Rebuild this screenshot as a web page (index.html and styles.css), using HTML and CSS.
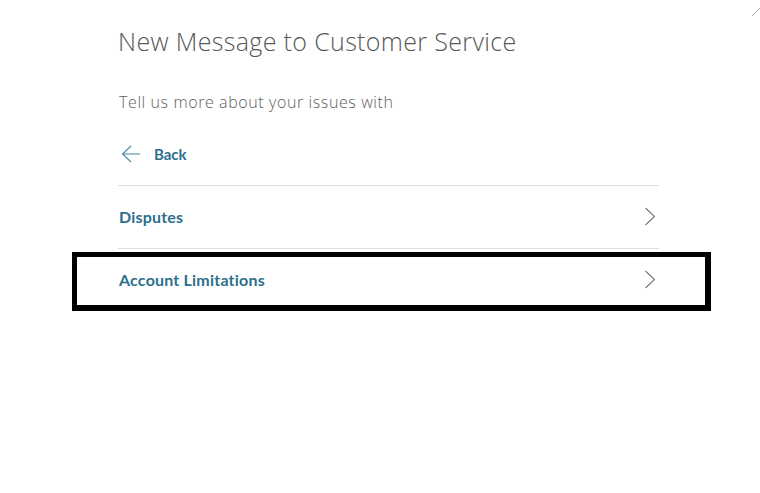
FILE: index.html
```html
<!DOCTYPE html>
<html>
<head>
<meta charset="utf-8">
<link rel="stylesheet" href="styles.css">
</head>
<body>
<div class="page">
  <h1 class="title">New Message to Customer Service</h1>
  <p class="subtitle">Tell us more about your issues with</p>
  <a class="back" href="#">
    <svg class="back-icon" width="20" height="18" viewBox="0 0 20 18"><path d="M10 1 L1.5 9 L10 17 M1.5 9 H19" fill="none" stroke="#4d86a3" stroke-width="1.1"/></svg>
    <span>Back</span>
  </a>
  <ul class="list">
    <li class="row"><span class="row-label">Disputes</span>
      <svg class="chev" width="12" height="19" viewBox="0 0 12 19"><path d="M1.5 1 L10.5 9.5 L1.5 18" fill="none" stroke="#777" stroke-width="1.1"/></svg></li>
    <li class="row"><span class="row-label">Account Limitations</span>
      <svg class="chev" width="12" height="19" viewBox="0 0 12 19"><path d="M1.5 1 L10.5 9.5 L1.5 18" fill="none" stroke="#777" stroke-width="1.1"/></svg></li>
  </ul>
</div>
<div class="highlight"></div>
<svg class="close" width="8" height="20" viewBox="0 0 8 20"><path d="M0 -8 L24 16 M0 16 L24 -8" fill="none" stroke="#aaa" stroke-width="1"/></svg>
</body>
</html>
```
FILE: styles.css
```css
html, body { margin: 0; padding: 0; background: #fff; }
body { width: 760px; height: 493px; overflow: hidden; position: relative; font-family: "Open Sans", "Liberation Sans", sans-serif; }
.page { padding: 25px 0 0 118px; width: 541px; }
.title { margin: 0; font-weight: 300; font-size: 25px; line-height: 32px; color: #585858; letter-spacing: 0.35px; }
.subtitle { margin: 35px 0 0 1px; font-size: 16px; line-height: 20px; color: #5e5e5e; font-weight: 300; letter-spacing: 0.6px; }
.back { display: flex; align-items: center; gap: 13px; height: 40px; margin-top: 22px; padding-left: 3px; text-decoration: none; color: #2c6f8d; font-family: "Lato", sans-serif; font-weight: 700; font-size: 15px; }
.back-icon { display: block; }
.list { list-style: none; margin: 11px 0 0 0; padding: 0; }
.row { display: flex; align-items: center; justify-content: space-between; height: 62px; border-top: 1px solid #dcdcdc; padding: 0 3px 1px 1px; box-sizing: border-box; height: 63px; font-family: "Lato", sans-serif; font-weight: 700; font-size: 16px; letter-spacing: 0.2px; color: #2c6f8d; }
.chev { display: block; }
.highlight { position: absolute; left: 72px; top: 252px; width: 639px; height: 59px; box-sizing: border-box; border-style: solid; border-color: #000; border-width: 5px 6px 6px 5px; }
.close { position: absolute; left: 752px; top: 0; }
```
